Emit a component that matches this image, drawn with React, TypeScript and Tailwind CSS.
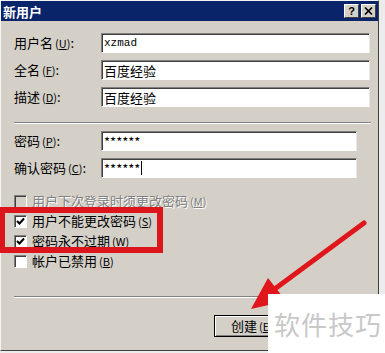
import React from 'react';

const font = { fontFamily: '"Noto Sans CJK SC", "Liberation Sans", sans-serif' };

const sunken =
  'h-[20px] bg-white border border-t-[#808080] border-l-[#808080] border-b-white border-r-[#e8e8e8] shadow-[inset_1px_1px_0_#404040] flex items-center px-[2px]';

const Key = ({ k }: { k: string }) => (
  <span className="text-[11px] ml-[2px]">
    (<u>{k}</u>)
  </span>
);

const FieldRow = (props: { label: string; k: string; value: string; mono?: boolean; wide?: boolean }) => (
  <div className="flex items-center">
    <div className="w-[87px] text-[13px] text-black">
      {props.label}
      <Key k={props.k} />:
    </div>
    <div className={`${sunken} ${props.wide ? 'w-[269px]' : 'w-[256px]'}`}>
      <span
        className={props.mono ? 'text-[11px] text-black' : 'text-[13px] text-black leading-none'}
        style={props.mono ? { fontFamily: '"Liberation Mono", monospace' } : undefined}
      >
        {props.value}
      </span>
      {props.value.startsWith('*') && props.label.startsWith('确认') ? (
        <span className="w-px h-[14px] bg-black ml-px" />
      ) : null}
    </div>
  </div>
);

const CheckRow = (props: { label: string; k: string; checked?: boolean; disabled?: boolean }) => (
  <div className="flex items-center h-[20px] gap-[5px]">
    <div
      className={`w-[13px] h-[13px] border border-t-[#808080] border-l-[#808080] border-b-white border-r-white shadow-[inset_1px_1px_0_#404040] flex items-center justify-center ${
        props.disabled ? 'bg-[#d4d0c8]' : 'bg-white'
      }`}
    >
      {props.checked ? (
        <svg width="9" height="9" viewBox="0 0 9 9">
          <path d="M1 4 L3.5 6.5 L8 1.5" stroke="#000" strokeWidth="2" fill="none" />
        </svg>
      ) : null}
    </div>
    <span
      className={`text-[13px] ${props.disabled ? 'text-[#808080] [text-shadow:1px_1px_0_#fff]' : 'text-black'}`}
    >
      {props.label}
      <Key k={props.k} />
    </span>
  </div>
);

const Separator = ({ className }: { className: string }) => (
  <div className={`h-[2px] border-t border-t-[#808080] border-b border-b-white ${className}`} />
);

export default function App() {
  return (
    <div className="w-[385px] h-[353px] bg-[#ececec] relative overflow-hidden" style={font}>
      <div className="w-[379px] h-[351px] bg-[#d4d0c8] border border-t-[#f4f4f4] border-l-[#f4f4f4] border-r-[#404040] border-b-[#404040] flex flex-col">
        {/* title bar */}
        <div className="h-[20px] bg-[#0a246a] flex items-center justify-between pl-[2px] pr-[2px]">
          <span className="text-white font-bold text-[13px] leading-none">新用户</span>
          <div className="flex gap-[2px]">
            <div className="w-[15px] h-[14px] bg-[#d4d0c8] border border-t-white border-l-white border-r-[#404040] border-b-[#404040] flex items-center justify-center text-[11px] font-bold leading-none text-black" style={{ fontFamily: '"Liberation Sans", sans-serif' }}>
              ?
            </div>
            <div className="w-[15px] h-[14px] bg-[#d4d0c8] border border-t-white border-l-white border-r-[#404040] border-b-[#404040] flex items-center justify-center">
              <svg width="9" height="8" viewBox="0 0 9 8">
                <path d="M1 0.5 L8 7.5 M8 0.5 L1 7.5" stroke="#000" strokeWidth="1.6" />
              </svg>
            </div>
          </div>
        </div>

        <div className="pl-[13px] flex flex-col">
          <div className="mt-[12px] flex flex-col gap-[7px]">
            <FieldRow label="用户名" k="U" value="xzmad" mono wide />
            <FieldRow label="全名" k="F" value="百度经验" wide />
            <FieldRow label="描述" k="D" value="百度经验" wide />
          </div>

          <Separator className="mt-[15px] w-[357px]" />

          <div className="mt-[7px] flex flex-col gap-[7px]">
            <FieldRow label="密码" k="P" value="******" />
            <FieldRow label="确认密码" k="C" value="******" />
          </div>

          <div className="mt-[13px] flex flex-col">
            <CheckRow label="用户下次登录时须更改密码" k="M" disabled />
            <CheckRow label="用户不能更改密码" k="S" checked />
            <CheckRow label="密码永不过期" k="W" checked />
            <CheckRow label="帐户已禁用" k="B" />
          </div>

          <Separator className="mt-[25px] w-[364px]" />

          <div className="mt-[17px] flex justify-end pr-[88px]">
            <div className="w-[76px] h-[22px] bg-[#d4d0c8] border border-black shadow-[inset_1px_1px_0_#fff,inset_-1px_-1px_0_#808080] flex items-center justify-center text-[13px] text-black">
              创建<Key k="E" />
            </div>
          </div>
        </div>
      </div>

      {/* red highlight box */}
      <div className="absolute left-[-1px] top-[207px] w-[164px] h-[46px] border-[6px] border-[#dc141c]" />

      {/* red arrow */}
      <svg className="absolute left-0 top-0" width="385" height="353" viewBox="0 0 385 353">
        <line x1="364" y1="223" x2="272" y2="291" stroke="#e0161c" strokeWidth="5" strokeLinecap="round" />
        <polygon points="251,309 268,278 286,301" fill="#e0161c" />
      </svg>

      {/* watermark */}
      <div className="absolute left-[268px] top-[294px] w-[117px] h-[59px] bg-white flex items-center pl-[6px]">
        <span className="text-[26px] text-[#c8c8c8] leading-none whitespace-nowrap tracking-[1px]">软件技巧</span>
      </div>
    </div>
  );
}
